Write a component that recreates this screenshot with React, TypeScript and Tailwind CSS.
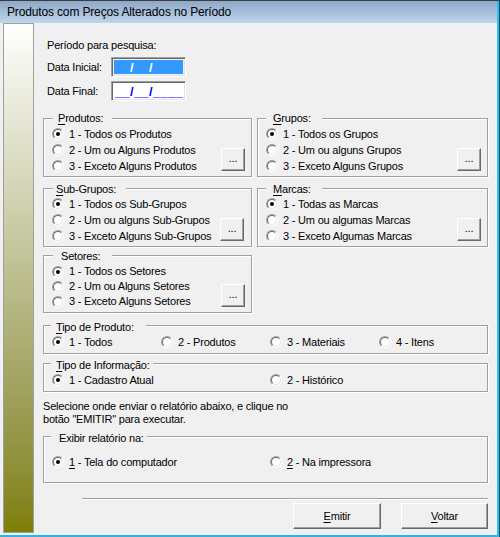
import React from "react";

function Radio({ checked }: { checked?: boolean }) {
  return (
    <span className="inline-flex w-[12px] h-[12px] shrink-0 rounded-full border border-t-[#a0a0a0] border-l-[#a0a0a0] border-r-white border-b-white">
      <span className="flex w-[10px] h-[10px] items-center justify-center rounded-full border border-t-[#696969] border-l-[#696969] border-r-[#e3e3e3] border-b-[#e3e3e3] bg-white">
        {checked && <span className="w-[4px] h-[4px] rounded-full bg-black" />}
      </span>
    </span>
  );
}

function R({
  checked,
  children,
  className,
}: {
  checked?: boolean;
  children: React.ReactNode;
  className?: string;
}) {
  return (
    <div className={"flex items-center gap-[5px] whitespace-nowrap " + (className ?? "")}>
      <Radio checked={checked} />
      <span>{children}</span>
    </div>
  );
}

function Box({
  legend,
  legendCls,
  className,
  children,
}: {
  legend: React.ReactNode;
  legendCls: string;
  className: string;
  children: React.ReactNode;
}) {
  return (
    <div
      className={
        "relative border border-[#a0a0a0] shadow-[inset_1px_1px_0_#ffffff,1px_1px_0_#ffffff] " +
        className
      }
    >
      <span className={"absolute bg-[#f0f0f0] leading-[13px] whitespace-nowrap " + legendCls}>
        {legend}
      </span>
      {children}
    </div>
  );
}

function Dots() {
  return (
    <div className="flex w-[24px] h-[23px] items-end justify-center pb-[6px] border border-t-white border-l-white border-r-[#696969] border-b-[#696969] shadow-[inset_-1px_-1px_0_#a0a0a0] bg-[#f0f0f0] leading-none">
      ...
    </div>
  );
}

function Btn({ children, className }: { children: React.ReactNode; className: string }) {
  return (
    <div
      className={
        "flex h-[26px] items-center justify-center border border-t-white border-l-white border-r-[#696969] border-b-[#696969] shadow-[inset_-1px_-1px_0_#a0a0a0] bg-[#f0f0f0] " +
        className
      }
    >
      {children}
    </div>
  );
}

function U({ children }: { children: React.ReactNode }) {
  return <span className="underline underline-offset-[2px]">{children}</span>;
}

export default function App() {
  return (
    <div className="flex w-[500px] h-[537px] overflow-hidden bg-[#f0f0f0] font-['Liberation_Sans',Arial,sans-serif] text-black">
      <div className="flex w-[497px] flex-col">
        {/* title bar */}
        <div className="flex h-[23px] items-center border-t border-[#3c3c3c] bg-linear-to-b from-[#8fa8c7] to-[#bed5ec] pl-[7px] text-[12px] tracking-[-0.15px]">
          Produtos com Preços Alterados no Período
        </div>
        {/* body */}
        <div className="flex h-[510px]">
          <div className="ml-[3px] w-[31px] h-[510px] border border-[#a0a0a0] bg-linear-to-b from-white to-[#7f7f00]" />
          <div className="ml-[9px] flex w-[445px] flex-col text-[11px] leading-[13px] tracking-[-0.2px]">
            <div className="mt-[16px] pl-[4px] h-[13px]">Período para pesquisa:</div>
            <div className="mt-[5px] flex h-[20px] items-center pl-[4px]">
              <span className="w-[64px]">Data Inicial:</span>
              <div className="flex h-[20px] w-[75px] items-center border border-t-[#a0a0a0] border-l-[#a0a0a0] border-r-white border-b-white shadow-[inset_1px_1px_0_#696969,inset_-1px_-1px_0_#e3e3e3] p-[2px]">
                <div className="flex h-full w-full items-center bg-[#3399ff] pl-[1px] text-[13px] font-bold tracking-[0.3px] text-white">
                  <span className="text-[#3399ff]">__</span>/<span className="text-[#3399ff]">__</span>/<span className="text-[#3399ff]">____</span>
                </div>
              </div>
            </div>
            <div className="mt-[4px] flex h-[20px] items-center pl-[4px]">
              <span className="w-[64px]">Data Final:</span>
              <div className="flex h-[20px] w-[75px] items-center border border-t-[#a0a0a0] border-l-[#a0a0a0] border-r-white border-b-white shadow-[inset_1px_1px_0_#696969,inset_-1px_-1px_0_#e3e3e3] bg-white pl-[3px] text-[13px] font-bold tracking-[0.3px] text-[#0000ff]">
                __/__/____
              </div>
            </div>

            <div className="mt-[17px] grid grid-cols-[209px_231px] gap-x-[5px]">
              <Box
                legend={<><U>P</U>rodutos:</>}
                legendCls="left-[9px] -top-[7px] pl-[5px] pr-[9px]"
                className="flex h-[59px]"
              >
                <div className="flex flex-1 flex-col pt-[7px] pl-[8px]">
                  <R className="h-[16px]" checked>1 - Todos os Produtos</R>
                  <R className="h-[16px]">2 - Um ou Alguns Produtos</R>
                  <R className="h-[16px]">3 - Exceto Alguns Produtos</R>
                </div>
                <div className="self-end mb-[5px] mr-[6px]">
                  <Dots />
                </div>
              </Box>
              <Box
                legend={<><U>G</U>rupos:</>}
                legendCls="left-[8px] -top-[7px] pl-[7px] pr-[11px]"
                className="flex h-[59px]"
              >
                <div className="flex flex-1 flex-col pt-[7px] pl-[8px]">
                  <R className="h-[16px]" checked>1 - Todos os Grupos</R>
                  <R className="h-[16px]">2 - Um ou alguns Grupos</R>
                  <R className="h-[16px]">3 - Exceto Alguns Grupos</R>
                </div>
                <div className="self-end mb-[5px] mr-[6px]">
                  <Dots />
                </div>
              </Box>

              <Box
                legend={<><U>S</U>ub-Grupos:</>}
                legendCls="left-[9px] -top-[6px] pl-[3px] pr-[10px]"
                className="mt-[11px] flex h-[59px]"
              >
                <div className="flex flex-1 flex-col pt-[7px] pl-[8px]">
                  <R className="h-[16px]" checked>1 - Todos os Sub-Grupos</R>
                  <R className="h-[16px]">2 - Um ou alguns Sub-Grupos</R>
                  <R className="h-[16px]">3 - Exceto Alguns Sub-Grupos</R>
                </div>
                <div className="self-end mb-[5px] mr-[7px]">
                  <Dots />
                </div>
              </Box>
              <Box
                legend={<><U>M</U>arcas:</>}
                legendCls="left-[8px] -top-[6px] pl-[7px] pr-[11px]"
                className="mt-[11px] flex h-[59px]"
              >
                <div className="flex flex-1 flex-col pt-[7px] pl-[8px]">
                  <R className="h-[16px]" checked>1 - Todas as Marcas</R>
                  <R className="h-[16px]">2 - Um ou algumas Marcas</R>
                  <R className="h-[16px]">3 - Exceto Algumas Marcas</R>
                </div>
                <div className="self-end mb-[5px] mr-[6px]">
                  <Dots />
                </div>
              </Box>

              <Box
                legend="Setores:"
                legendCls="left-[9px] -top-[6px] pl-[8px] pr-[12px]"
                className="mt-[8px] flex h-[58px]"
              >
                <div className="flex flex-1 flex-col pt-[8px] pl-[8px]">
                  <R className="h-[15px]" checked>1 - Todos os Setores</R>
                  <R className="h-[15px]">2 - Um ou Alguns Setores</R>
                  <R className="h-[15px]">3 - Exceto Alguns Setores</R>
                </div>
                <div className="self-end mb-[5px] mr-[6px]">
                  <Dots />
                </div>
              </Box>
              <div />
            </div>

            <Box
              legend={<><U>T</U>ipo de Produto:</>}
              legendCls="left-[7px] -top-[5px] pl-[5px] pr-[12px]"
              className="mt-[12px] h-[29px]"
            >
              <div className="grid grid-cols-[109px_109px_109px_1fr] pt-[8px] pl-[8px]">
                <R className="h-[16px]" checked>1 - Todos</R>
                <R className="h-[16px]">2 - Produtos</R>
                <R className="h-[16px]">3 - Materiais</R>
                <R className="h-[16px]">4 - Itens</R>
              </div>
            </Box>

            <Box
              legend={<><U>T</U>ipo de Informação:</>}
              legendCls="left-[7px] -top-[5px] pl-[5px] pr-[3px]"
              className="mt-[9px] h-[29px]"
            >
              <div className="grid grid-cols-[218px_1fr] pt-[8px] pl-[8px]">
                <R className="h-[16px]" checked>1 - Cadastro Atual</R>
                <R className="h-[16px]">2 - Histórico</R>
              </div>
            </Box>

            <div className="mt-[8px] leading-[13px]">
              <div>Selecione onde enviar o relatório abaixo, e clique no</div>
              <div>botão "EMITIR" para executar.</div>
            </div>

            <Box
              legend="Exibir relatório na:"
              legendCls="left-[7px] -top-[5px] pl-[8px] pr-[3px]"
              className="mt-[10px] h-[47px]"
            >
              <div className="grid grid-cols-[218px_1fr] pt-[17px] pl-[8px]">
                <R className="h-[16px]" checked>
                  <U>1</U> - Tela do computador
                </R>
                <R className="h-[16px]">
                  <U>2</U> - Na impressora
                </R>
              </div>
            </Box>

            <div className="mt-[15px] ml-[39px] h-[2px] border-t border-[#a0a0a0] border-b border-b-white" />

            <div className="mt-[3px] flex justify-end gap-[20px]">
              <Btn className="w-[88px]">
                <span><U>E</U>mitir</span>
              </Btn>
              <Btn className="w-[87px]">
                <span><U>V</U>oltar</span>
              </Btn>
            </div>
          </div>
        </div>
        <div className="mt-auto h-[2px] bg-[#2ab5e8]" />
      </div>
      <div className="w-[3px] h-full border-t border-[#3c3c3c] bg-[#2fc0ee] border-r border-r-[#1c4a6b]" />
    </div>
  );
}
